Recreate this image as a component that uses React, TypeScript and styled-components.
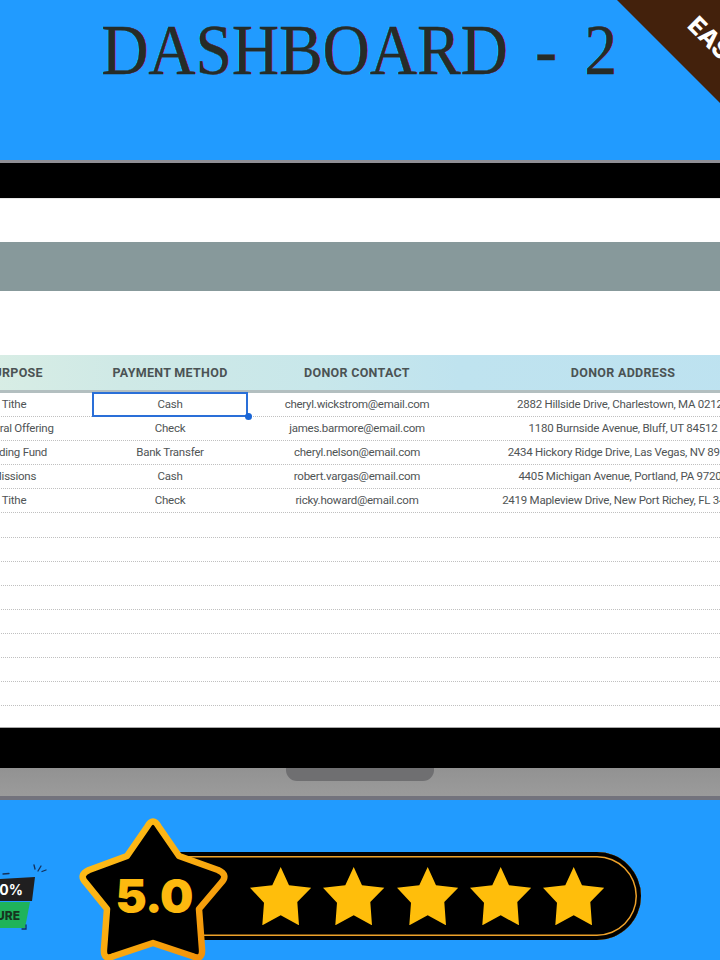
import React from "react";
import styled, { createGlobalStyle } from "styled-components";

const Global = createGlobalStyle`
  html, body { margin: 0; padding: 0; background: #219bff; }
`;

const Page = styled.div`
  width: 720px;
  height: 960px;
  overflow: hidden;
  background: #219bff;
  display: flex;
  flex-direction: column;
`;

const Header = styled.header`
  position: relative;
  height: 160px;
  flex: none;
  overflow: hidden;
  padding-top: 10px;
  box-sizing: border-box;
  text-align: center;
`;

const Title = styled.h1`
  margin: 0 0 0 -2px;
  font-family: "Liberation Serif", serif;
  font-weight: 400;
  font-size: 71px;
  line-height: 80px;
  word-spacing: 12px;
  white-space: nowrap;
  color: #262c27;
  transform: scaleX(0.92);
  -webkit-text-stroke: 0.4px #262c27;
  text-shadow: -0.8px 0 0 rgba(0, 230, 230, 0.8), 0.8px 0 0 rgba(220, 0, 200, 0.8);
`;

const Ribbon = styled.div`
  position: absolute;
  top: 0;
  right: 0;
  width: 103px;
  height: 103px;
  background: #43210c;
  clip-path: polygon(0 0, 100% 0, 100% 100%);
  overflow: hidden;
`;

const RibbonText = styled.span`
  position: absolute;
  left: 75px;
  top: 7px;
  font-family: "Inter", sans-serif;
  font-weight: 800;
  font-size: 24px;
  line-height: 28px;
  color: #fff;
  transform: rotate(45deg);
  transform-origin: 0 50%;
  white-space: nowrap;
`;

const TopEdge = styled.div`
  height: 3px;
  flex: none;
  background: #8f8f96;
`;

const Bezel = styled.div`
  height: 35px;
  flex: none;
  background: #000;
`;

const LowerBezel = styled(Bezel)`
  height: 40px;
`;

const Screen = styled.main`
  height: 530px;
  flex: none;
  background: #fff;
  padding-top: 43px;
  box-sizing: border-box;
  overflow: hidden;
  border-top: 1px solid #e8e8e8;
  border-bottom: 1px solid #a8a8a8;
`;

const SheetBand = styled.div`
  height: 49px;
  background: #87999b;
  margin-bottom: 64px;
`;

const Table = styled.div`
  width: 844px;
  margin-left: -64px;
  font-family: "Roboto", sans-serif;
`;

const HeadRow = styled.div`
  display: grid;
  grid-template-columns: 156px 156px 218px 314px;
  height: 38px;
  box-sizing: border-box;
  border-bottom: 3px solid #b3bfc0;
  background: linear-gradient(90deg, #dcefe4 0%, #cfe9e6 22%, #c8e7ea 45%, #bfe3ef 62%, #bde2f0 100%);
`;

const HeadCell = styled.div`
  display: flex;
  align-items: center;
  justify-content: center;
  font-weight: 700;
  font-size: 12.5px;
  letter-spacing: 0.3px;
  color: #4b5354;
  white-space: nowrap;
`;

const Row = styled.div`
  display: grid;
  grid-template-columns: 156px 156px 218px 314px;
  height: 24.1px;
  box-sizing: border-box;
  border-bottom: 1px dotted #c0c0c0;
`;

const Cell = styled.div`
  position: relative;
  display: flex;
  align-items: center;
  justify-content: center;
  padding-bottom: 2px;
  box-sizing: border-box;
  font-size: 11.5px;
  letter-spacing: -0.25px;
  color: #4f5455;
  white-space: nowrap;
`;

const Selection = styled.span`
  position: absolute;
  inset: -1px 0 -1px 0;
  border: 2px solid #2a6fd8;
  pointer-events: none;
  &::after {
    content: "";
    position: absolute;
    right: -6px;
    bottom: -5px;
    width: 7px;
    height: 7px;
    border-radius: 50%;
    background: #1a66d6;
  }
`;

const Base = styled.div`
  position: relative;
  height: 28px;
  flex: none;
  background: linear-gradient(#929292, #9b9b9b);
`;

const Notch = styled.div`
  position: absolute;
  top: 0;
  left: 286px;
  width: 148px;
  height: 13px;
  background: #6f6f71;
  border-radius: 0 0 11px 11px;
`;

const BaseEdge = styled.div`
  height: 4px;
  flex: none;
  background: #73737d;
`;

const Footer = styled.footer`
  flex: 1;
  display: flex;
  align-items: flex-start;
  overflow: hidden;
`;

const Badge = styled.div`
  position: relative;
  width: 47px;
  flex: none;
  margin-top: 77px;
  display: flex;
  flex-direction: column;
  gap: 1px;
`;

const BadgeDark = styled.div`
  width: 35px;
  height: 24px;
  background: #201f20;
  clip-path: polygon(0 2px, 100% 0, 32px 100%, 0 100%);
  display: flex;
  align-items: center;
  justify-content: flex-end;
  padding-right: 12px;
  box-sizing: border-box;
  font-family: "Inter", sans-serif;
  font-weight: 700;
  font-size: 14px;
  color: #fff;
`;

const BadgeGreen = styled.div`
  width: 30px;
  height: 26px;
  background: #1fb35b;
  clip-path: polygon(0 0, 100% 0, 25px 100%, 0 100%);
  display: flex;
  align-items: center;
  justify-content: flex-end;
  padding-right: 10px;
  box-sizing: border-box;
  font-family: "Inter", sans-serif;
  font-weight: 800;
  font-size: 12px;
  color: #16351f;
`;

const BadgeMarks = styled.svg`
  position: absolute;
  left: 0;
  top: -14px;
  width: 47px;
  height: 70px;
`;

const StarWrap = styled.div`
  position: relative;
  z-index: 2;
  flex: none;
  width: 158px;
  height: 150px;
  margin: 13px 0 0 28px;
`;

const StarScore = styled.span`
  position: absolute;
  left: 0;
  right: 0;
  top: 55px;
  text-align: center;
  font-family: "Inter", sans-serif;
  font-weight: 900;
  font-size: 47px;
  line-height: 56px;
  letter-spacing: -1px;
  color: #fdb90f;
`;

const Pill = styled.div`
  flex: none;
  width: 471px;
  height: 88px;
  margin: 52px 0 0 -63px;
  padding-left: 80px;
  box-sizing: border-box;
  border-radius: 0 44px 44px 0;
  background: #000;
  box-shadow: inset 0 0 0 4px #000, inset 0 0 0 5.5px #eda12a;
  display: flex;
  align-items: center;
  gap: 12px;
`;

const SmallStar = styled.svg`
  width: 61.3px;
  height: 58.3px;
  flex: none;
  fill: #ffbe0b;
`;

const purpose = ["Tithe", "General Offering", "Building Fund", "Missions", "Tithe"];
const rows = [
  ["Cash", "cheryl.wickstrom@email.com", "2882 Hillside Drive, Charlestown, MA 02125"],
  ["Check", "james.barmore@email.com", "1180 Burnside Avenue, Bluff, UT 84512"],
  ["Bank Transfer", "cheryl.nelson@email.com", "2434 Hickory Ridge Drive, Las Vegas, NV 89101"],
  ["Cash", "robert.vargas@email.com", "4405 Michigan Avenue, Portland, PA 97201"],
  ["Check", "ricky.howard@email.com", "2419 Mapleview Drive, New Port Richey, FL 34652"],
];

const Star = () => (
  <SmallStar viewBox="0 0 61.3 58.3">
    <polygon points="30.7,0 39,18.3 61.3,20.7 47.3,35 49,58.3 30.7,48.3 12.3,58.3 14,35.7 0,20.7 22.3,18.3" />
  </SmallStar>
);

export default function App() {
  return (
    <Page>
      <Global />
      <Header>
        <Title>DASHBOARD - 2</Title>
        <Ribbon>
          <RibbonText>EASY</RibbonText>
        </Ribbon>
      </Header>
      <TopEdge />
      <Bezel />
      <Screen>
        <SheetBand />
        <Table>
          <HeadRow>
            <HeadCell>PURPOSE</HeadCell>
            <HeadCell>PAYMENT METHOD</HeadCell>
            <HeadCell>DONOR CONTACT</HeadCell>
            <HeadCell>DONOR ADDRESS</HeadCell>
          </HeadRow>
          {rows.map((r, i) => (
            <Row key={i}>
              <Cell>{purpose[i]}</Cell>
              <Cell>
                {r[0]}
                {i === 0 && <Selection />}
              </Cell>
              <Cell>{r[1]}</Cell>
              <Cell>{r[2]}</Cell>
            </Row>
          ))}
          {Array.from({ length: 8 }).map((_, i) => (
            <Row key={`empty-${i}`} />
          ))}
        </Table>
      </Screen>
      <LowerBezel />
      <Base>
        <Notch />
      </Base>
      <BaseEdge />
      <Footer>
        <Badge>
          <BadgeDark>100%</BadgeDark>
          <BadgeGreen>SECURE</BadgeGreen>
          <BadgeMarks viewBox="0 0 47 70" fill="none" stroke="#14305a" strokeWidth="1.3" strokeLinecap="round">
            <path d="M34 2 L35 6" />
            <path d="M41 3 L38 8" />
            <path d="M46 7 L42 8.5" />
            <path d="M3 11 L9 10.5" />
            <path d="M26 62 L26 66 L22 66" />
          </BadgeMarks>
        </Badge>
        <StarWrap>
          <svg width="158" height="150" viewBox="0 0 158 150">
            <defs>
              <linearGradient id="starRim" x1="0" y1="0" x2="1" y2="1">
                <stop offset="0" stopColor="#ffc21a" />
                <stop offset="0.6" stopColor="#f9a90f" />
                <stop offset="1" stopColor="#f08c08" />
              </linearGradient>
            </defs>
            <path
              d="M72 14 Q78 3 84 14 L104 43 L143 57 Q154 62 146 70 L124 96 L127 136 Q128 148 117 143 L78 130 L39 143 Q28 148 29 136 L32 96 L11 70 Q3 62 14 57 L52 43 Z"
              fill="#000"
              stroke="url(#starRim)"
              strokeWidth="6.5"
              strokeLinejoin="round"
            />
          </svg>
          <StarScore>5.0</StarScore>
        </StarWrap>
        <Pill>
          <Star />
          <Star />
          <Star />
          <Star />
          <Star />
        </Pill>
      </Footer>
    </Page>
  );
}
